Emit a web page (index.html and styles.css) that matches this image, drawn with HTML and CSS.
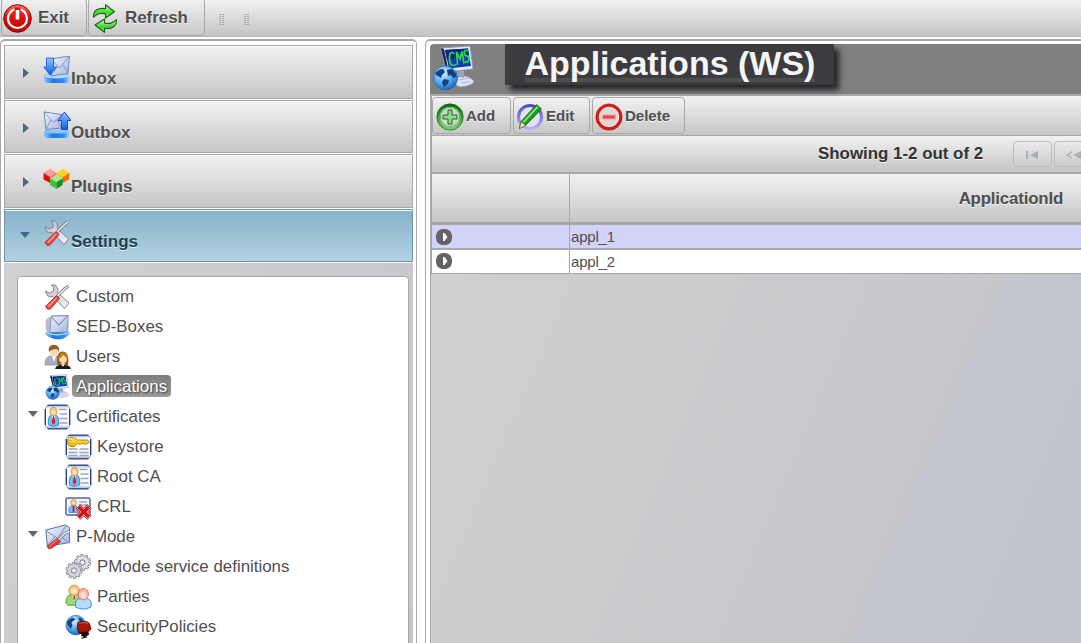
FILE: index.html
```html
<!DOCTYPE html>
<html lang="en">
<head>
<meta charset="utf-8">
<title>Applications (WS)</title>
<link rel="stylesheet" href="styles.css">
</head>
<body>
<svg class="defs" width="0" height="0" aria-hidden="true">
  <defs>
    <linearGradient id="red" x2="0" y2="1"><stop stop-color="#f77"/><stop offset=".4" stop-color="#e21212"/><stop offset="1" stop-color="#b00"/></linearGradient>
    <linearGradient id="green" x2="0" y2="1"><stop stop-color="#0a700a"/><stop offset="1" stop-color="#6fce62"/></linearGradient>
    <linearGradient id="leaf" x2="0" y2="1"><stop stop-color="#cfffae"/><stop offset=".6" stop-color="#43cf32"/><stop offset="1" stop-color="#8df56c"/></linearGradient>
    <linearGradient id="violet" x2="0" y2="1"><stop stop-color="#5048d0"/><stop offset="1" stop-color="#b4b2fa"/></linearGradient>
    <linearGradient id="blue" x2="0" y2="1"><stop stop-color="#8cc8ff"/><stop offset="1" stop-color="#0a5cf0"/></linearGradient>
    <linearGradient id="tray" x2="1" y2="0"><stop stop-color="#8cc4ff"/><stop offset=".35" stop-color="#1c78ea"/><stop offset=".75" stop-color="#2f8bf5"/><stop offset="1" stop-color="#b4dcff"/></linearGradient>
    <linearGradient id="paper" x2="1" y2="1"><stop stop-color="#f2f6ff"/><stop offset="1" stop-color="#a3b4dc"/></linearGradient>
    <linearGradient id="metal" x2="1" y2="1"><stop stop-color="#bcbcc4"/><stop offset="1" stop-color="#f4f4fa"/></linearGradient>
    <linearGradient id="card" x2="0" y2="1"><stop stop-color="#aab6de"/><stop offset=".15" stop-color="#fff"/><stop offset=".85" stop-color="#f4f6fc"/><stop offset="1" stop-color="#98a5d2"/></linearGradient>
    <linearGradient id="gold" x2="0" y2="1"><stop stop-color="#ffee58"/><stop offset="1" stop-color="#efaa00"/></linearGradient>
    <radialGradient id="globe" cx=".4" cy=".3" r=".75"><stop stop-color="#d9f2ff"/><stop offset=".5" stop-color="#5fb3f3"/><stop offset="1" stop-color="#105bb5"/></radialGradient>
    <radialGradient id="face" cy=".6"><stop stop-color="#fff2d8"/><stop offset="1" stop-color="#eebb74"/></radialGradient>
    <radialGradient id="pink" cy=".6"><stop stop-color="#fff6f2"/><stop offset="1" stop-color="#f6a9a0"/></radialGradient>
  </defs>
  <symbol id="i-exit" viewBox="0 0 29 29">
    <circle cx="14.5" cy="14.5" r="13.8" fill="url(#red)" stroke="#8c0000"/>
    <circle cx="14.5" cy="14.5" r="9.500" fill="none" stroke="#fff" stroke-width="2.200"/>
    <path d="M11.500 3.500h6v13h-6z" fill="#d51616"/><path d="M14.500 6v9.500" stroke="#fff" stroke-width="3.600"/>
  </symbol>
  <symbol id="i-refresh" viewBox="0 0 26 29">
    <g fill="url(#leaf)" stroke="#146414" stroke-width="1.100" stroke-linejoin="round">
      <path d="M1.500 13.200C1 6 6.500 3.500 13.500 4.600V.8L22.500 7.800L13.500 14V9.900C8 8.800 5.300 9.500 1.500 13.200Z"/>
      <path d="M24.500 15.600C25 22.800 19.500 25.300 12.500 24.200V28.200L3 21L12.500 15V19.100C18 20.200 20.700 19.300 24.500 15.600Z"/>
    </g>
  </symbol>
  <symbol id="i-inbox" viewBox="0 0 28 28">
    <path d="M1 20q0-2 4-2h18q4 0 4 2v4q0 3-5 3H6q-5 0-5-3z" fill="url(#tray)"/><ellipse cx="14" cy="20" rx="12" ry="2.500" fill="#b4dbff"/>
    <path d="M8 3L26.500 0L25 17.500L8 20z" fill="url(#paper)" stroke="#596fae" stroke-width=".8"/>
    <path d="M8.500 3.500l8 8.500l9.500-11.500M8.500 19l6-9M25 17l-5-8" fill="none" stroke="#7d8fbe" stroke-width=".9"/>
    <path d="M3.500 2h7v9h3L7 19L.8 11h2.700z" fill="url(#blue)" stroke="#1756ce" stroke-width=".8"/>
  </symbol>
  <symbol id="i-outbox" viewBox="0 0 28 28">
    <path d="M1 21q0-2 4-2h18q4 0 4 2v3q0 3-5 3H6q-5 0-5-3z" fill="url(#tray)"/><ellipse cx="14" cy="20.500" rx="12" ry="2" fill="#8bc4ff"/>
    <path d="M1 1L19 3.500V17L3 18.500z" fill="url(#paper)" stroke="#596fae" stroke-width=".8"/>
    <path d="M1.500 1.500l9 10l8-7M3 18l5-9M18 16l-4-7" fill="none" stroke="#7d8fbe" stroke-width=".9"/>
    <path d="M18.500 18.500v-9h-3.500L21.500 1L28 9.500h-3.500v9z" fill="url(#blue)" stroke="#1739ce" stroke-width=".9"/>
  </symbol>
  <symbol id="i-cubes" viewBox="0 0 27 21">
    <path d="M.5 5l6.500-4.500L13.500 5L7 9z" fill="#ffa09c"/><path d="M.5 5L7 9v6L.5 11.500z" fill="#e30d14"/><path d="M13.500 5L7 9v6l6.500-4z" fill="#ff5a5a"/>
    <path d="M13.500 5L20 .5L26.500 5L20 9z" fill="#ffd12c"/><path d="M13.500 5L20 9v6l-6.500-4z" fill="#ffae14"/><path d="M26.500 5L20 9v6l6-3.500z" fill="#f66b05"/>
    <path d="M7 10.500L13.500 6.500l6.500 4L13.500 14z" fill="#a6ea96"/><path d="M7 10.500l6.500 3.500v7L7 17z" fill="#42c331"/><path d="M20 10.500L13.500 14v7l6-4z" fill="#119226"/>
  </symbol>
  <symbol id="i-tools" viewBox="0 0 26 26">
    <path d="M7 1Q13 0 13.500 6L13 8.500L24.500 19L20 24.500L8.500 12.500Q2 14 1 7L5 9L9 7L9 3.500z" fill="url(#metal)" stroke="#7d7d91" stroke-width=".9"/>
    <path d="M13 12L20.500 4.500L24 2" fill="none" stroke="#77778a" stroke-width="3"/><path d="M13 12L20.500 4.500L24 2" fill="none" stroke="#ededf4" stroke-width="1.500"/>
    <path d="M12 11.500l3 3L6 25Q2.500 26.500 1 22.500z" fill="#e64e46" stroke="#a21818" stroke-width=".8"/><path d="M12 14l-8 8.500" stroke="#ffa49a" stroke-width="1.300"/>
  </symbol>
  <symbol id="i-sed" viewBox="0 0 28 28">
    <path d="M1 8Q4 1 12 1h11q2 5 0 17L2 21z" fill="#bcbec7"/>
    <path d="M0 20q6-1 14-1t14 0q-2 7-13 8.500Q3 27 0 20z" fill="url(#tray)"/><path d="M2 20q11 5 24 0" fill="none" stroke="#c2e2ff" stroke-width="1.200"/>
    <path d="M7.500 2.500L25.500 1.500L25 19.500L5.500 20z" fill="url(#paper)" stroke="#6e83b6" stroke-width=".9"/>
    <path d="M8 3.500l7.500 8.500L24.500 2" fill="none" stroke="#5872a8" stroke-width="1"/>
  </symbol>
  <symbol id="i-users" viewBox="0 0 27 26">
    <path d="M1 21Q1 12 7 12h5q5 0 5 9z" fill="#a5adcc" stroke="#747da2" stroke-width=".6"/><path d="M8 12l2 6l2-6z" fill="#fff"/>
    <circle cx="10" cy="7.500" r="4.300" fill="#ffd8a6"/><path d="M5 8Q3.500 1 10 .8Q16 1 15 8Q13.500 3.500 9 5.500Q6 6 5 8z" fill="#936024"/>
    <path d="M13.500 21q-2-13 5-13.500Q26 8 24 21z" fill="#9a5c10"/><circle cx="19" cy="15" r="3.900" fill="#ffdcae"/><path d="M14.500 15Q18 14 19.500 10.500Q21 14 24 15Q23 8.500 19 8.500T14.500 15z" fill="#bd801e"/>
    <path d="M11 25q1-4 6-4l2 1l2-1q5 0 6 4z" fill="#181818"/><path d="M17 19h4l-2 4z" fill="#ffdcae"/>
  </symbol>
  <symbol id="i-cms" viewBox="0 0 44 46">
    <path d="M23 34Q33 27 42 36Q42 40 29 42Q22 41 23 34z" fill="#dfe3f3" stroke="#8e97ba" stroke-width=".7"/><path d="M27 35l10-2M29 38l9-1" stroke="#adb5cc"/>
    <path d="M25 24l7 2v7l-7-2z" fill="#9aa3c4"/>
    <path d="M9 3L38 1L41 24L15 27z" fill="#e3e8f8" stroke="#8d94b4" stroke-width=".9"/>
    <path d="M9 3L15 27L16 23L12 4z" fill="#20234a"/><path d="M13 5L36 3.500L39 21L17 23.500z" fill="#123daa"/><path d="M13 5L36 3.500L37 10L15 15z" fill="#0a2880"/>
    <g fill="none" stroke="#25dc50" stroke-width="1.700"><path d="M22.500 8.500Q17 5 17.500 14T24 19.500M25.500 20L24.500 7L28 14L30 6.500L32 18.500M37 6Q31.500 3.500 32.500 9Q33 11 35.500 11Q38 13 36.500 16Q35 18 33 16.500"/></g>
    <circle cx="13.500" cy="33" r="12" fill="url(#globe)" stroke="#2569b6" stroke-width=".7"/>
    <path d="M3 29q3-5 8-5l2 3l-3 3l-1 3l-3-2zM15 25l5-1l4 5v3l-3 1l-2-3l-3 1zM12 34l5 1l-1 4l-4 3l-2-5z" fill="#153f7d"/>
  </symbol>
  <symbol id="i-cert" viewBox="0 0 26 26">
    <rect x=".8" y="1.300" width="24.400" height="23.400" rx="4" fill="url(#card)" stroke="#8d9bc9" stroke-width=".8"/>
    <path d="M3.500 1.300h19M3.500 24.700h19" stroke="#43558f" stroke-width="1.500" stroke-linecap="round"/><path d="M.8 5v16M25.200 5v16" stroke="#243c83" stroke-width="1.300"/>
    <path d="M14 5.500h8M15 10h8M15 14.500h8M15 19h8" stroke="#a1a5ba" stroke-width="1.500"/>
    <path d="M4 21q-1-9 3-10h4q4 1 3 10q-5 3-10 0z" fill="#71bdf6" stroke="#287fca" stroke-width=".8"/><path d="M7 11l2 7l2-7z" fill="#fff"/><path d="M8.500 12l-1.300 6l1.800 3l1.800-3l-1.300-6z" fill="#e21a1a"/>
    <ellipse cx="9" cy="7.500" rx="3.500" ry="4.200" fill="url(#face)" stroke="#c5872e" stroke-width=".7"/>
  </symbol>
  <symbol id="i-key" viewBox="0 0 26 26">
    <rect x=".8" y="1.300" width="24.400" height="23.400" rx="4" fill="url(#card)" stroke="#8d9bc9" stroke-width=".8"/>
    <path d="M3.500 1.300h19M3.500 24.700h19" stroke="#43558f" stroke-width="1.500" stroke-linecap="round"/><path d="M.8 5v16M25.200 5v16" stroke="#243c83" stroke-width="1.300"/>
    <path d="M3 15h9M3 18.500h9M3 21.500h9M14 15h9M14 18.500h9M14 21.500h9" stroke="#a1a5ba" stroke-width="1.300"/>
    <path d="M2 6Q3 2.500 8 3.500L12 6L22 6L24 8L21.500 10H18L17 9L15 10.500L12 9.500Q9 14 5 12.500Q1 11 2 6z" fill="url(#gold)" stroke="#b27b00" stroke-width=".9"/><circle cx="4.500" cy="7.500" r="1.200" fill="#fff" stroke="#a76c00" stroke-width=".6"/>
  </symbol>
  <symbol id="i-crl" viewBox="0 0 27 26">
    <rect x="1" y="4" width="24" height="17" rx="1.500" fill="#f3f5fc" stroke="#52649f" stroke-width="1.500"/>
    <path d="M14 8h8M14 11h8" stroke="#a1a5ba" stroke-width="1.300"/>
    <path d="M4 18.500q-1-6 3-7h3q4 1 3 7z" fill="#71bdf6" stroke="#287fca" stroke-width=".7"/><path d="M8.500 12v6" stroke="#e21a1a" stroke-width="1.800"/><circle cx="8.500" cy="8.500" r="2.900" fill="url(#face)" stroke="#c5872e" stroke-width=".6"/>
    <path d="M13 12.500l11.500 11M24.500 12.500L13 23.500" stroke="#900" stroke-width="6"/><path d="M13.300 12.800l11 10.500M24.300 12.800L13.300 23.300" stroke="#fff" stroke-width="4.600"/><path d="M13.500 13l10.500 10M24 13L13.500 23" stroke="#d01010" stroke-width="3.600"/>
  </symbol>
  <symbol id="i-pmode" viewBox="0 0 28 28">
    <path d="M1.500 6.500L22.500 1L27 4V20L3 24z" fill="url(#paper)" stroke="#4d679c" stroke-width="1"/>
    <path d="M2 7.500l12 8L23 2M3 23l8-9M25 19l-8-6" fill="none" stroke="#7488b8" stroke-width="1"/>
    <path d="M14 18l8-8l5-2" fill="none" stroke="#64647a" stroke-width="3"/><path d="M14 18l8-8l5-2" fill="none" stroke="#ececf4" stroke-width="1.700"/>
    <path d="M13 15.500l4.500 3.500L7 26.500H4L3 24z" fill="#e23b38" stroke="#a01818" stroke-width=".7"/><path d="M13 17.500l-8 7" stroke="#ff9a90"/>
  </symbol>
  <symbol id="i-gears" viewBox="0 0 27 26">
    <g fill="none" stroke="#81818c"><circle cx="17.500" cy="8.500" r="6.700" stroke-width="3.600" stroke-dasharray="2.700 1.510"/><circle cx="17.500" cy="8.500" r="4.800" stroke-width="4.600"/></g>
    <g fill="none" stroke="#dfdfe8"><circle cx="17.500" cy="8.500" r="6.700" stroke-width="2.200" stroke-dasharray="1.500 2.710" stroke-dashoffset="-.6"/><circle cx="17.500" cy="8.500" r="4.600" stroke-width="3.300"/></g>
    <g fill="none" stroke="#81818c"><circle cx="9" cy="16.500" r="6.700" stroke-width="3.600" stroke-dasharray="2.700 1.510"/><circle cx="9" cy="16.500" r="4.800" stroke-width="4.600"/></g>
    <g fill="none" stroke="#d4d4df"><circle cx="9" cy="16.500" r="6.700" stroke-width="2.200" stroke-dasharray="1.500 2.710" stroke-dashoffset="-.6"/><circle cx="9" cy="16.500" r="4.600" stroke-width="3.300"/></g>
    <g fill="#fff" stroke="#81818c" stroke-width=".9"><circle cx="17.500" cy="8.500" r="2.400"/><circle cx="9" cy="16.500" r="2.400"/></g>
  </symbol>
  <symbol id="i-parties" viewBox="0 0 28 27">
    <path d="M1 20Q1 11 7 11h5q5 0 5 8v3H3z" fill="#96dc6f" stroke="#3f9c26" stroke-width=".9"/><path d="M7 11h5l-2.500 7z" fill="#fff"/><path d="M9.500 12v4" stroke="#f00" stroke-width="1.500"/><circle cx="9.500" cy="6.500" r="5.500" fill="url(#face)" stroke="#c5872e" stroke-width=".8"/>
    <path d="M11 24Q10 15 16 15h6q6 0 5 9q-8 4-16 0z" fill="#b3dcff" stroke="#2c7fe0" stroke-width=".9"/><ellipse cx="19" cy="10.500" rx="5.400" ry="6" fill="url(#pink)" stroke="#db6c64" stroke-width=".8"/>
  </symbol>
  <symbol id="i-security" viewBox="0 0 29 26">
    <circle cx="11.500" cy="11" r="10.500" fill="url(#globe)" stroke="#1d5da6" stroke-width=".7"/><path d="M2 8q3-5 7-5l2 2l-4 3l1 4l-2 3l-3-4zM14 3l4 1l2 3l-4 1z" fill="#154480"/>
    <path d="M14 8l9-1l3 2l2 6l-3 3l-9 1l-3-4z" fill="#a91608" stroke="#4d0500" stroke-width=".9"/><path d="M15 9l8-1l2 2" fill="none" stroke="#e7533b" stroke-width="1.200"/><path d="M13 16l3 3l9-1l1 3l-3 2l1 1l-7 2l3-3h-3l1-2l-3-1z" fill="#170a14"/>
  </symbol>
  <symbol id="i-add" viewBox="0 0 28 28">
    <circle cx="14" cy="14" r="11.800" fill="#f3f3f3" stroke="url(#green)" stroke-width="3"/><circle cx="14" cy="14" r="13.200" fill="none" stroke="#0f5c12" stroke-width=".6"/><circle cx="14" cy="14" r="9.600" fill="#d3d6d1" stroke="#2a8a2c" stroke-width=".7"/>
    <path d="M12 7h4v5h5v4h-5v5h-4v-5H7v-4h5z" fill="#90d78b" stroke="#126f17"/>
  </symbol>
  <symbol id="i-edit" viewBox="0 0 28 28">
    <circle cx="14" cy="14" r="11.500" fill="#e3e3f0" stroke="url(#violet)" stroke-width="3"/>
    <path d="M20.500 1.500l5 4.500L10 22L3.500 25.500L5 18.500z" fill="#189d1c" stroke="#176118" stroke-width=".8"/><path d="M21.500 4L7.500 19" stroke="#95ec86" stroke-width="1.800"/><path d="M5 18.500l5 4l-6.500 3z" fill="#f3dfb5" stroke="#484830" stroke-width=".6"/>
  </symbol>
  <symbol id="i-delete" viewBox="0 0 28 28">
    <circle cx="14" cy="14" r="11.600" fill="#dadada" stroke="#d81b0e" stroke-width="3"/><circle cx="14" cy="14" r="13.200" fill="none" stroke="#9b1108" stroke-width=".6"/><circle cx="14" cy="14" r="9.800" fill="none" stroke="#fff" stroke-width=".6"/>
    <rect x="7.500" y="12" width="13" height="4" fill="#f34347" stroke="#f5a3a3" stroke-width="1"/>
  </symbol>
  <symbol id="i-expand" viewBox="0 0 16 16"><rect width="16" height="16" rx="7" fill="#656164"/><path d="M7 4h1.500L11.500 8L8.500 12H7z" fill="#fff"/></symbol>
</svg>

<div class="app">
  <header class="topbar">
    <button class="btn btn-exit"><svg class="ic-exit"><use href="#i-exit"/></svg><span>Exit</span></button>
    <button class="btn btn-refresh"><svg class="ic-refresh"><use href="#i-refresh"/></svg><span>Refresh</span></button>
    <i class="grip"></i><i class="grip"></i>
  </header>
  <div class="columns">
    <aside class="side">
      <h3 class="acc"><i class="tri"></i><svg><use href="#i-inbox"/></svg><span>Inbox</span></h3>
      <h3 class="acc"><i class="tri"></i><svg><use href="#i-outbox"/></svg><span>Outbox</span></h3>
      <h3 class="acc"><i class="tri"></i><svg class="ic-cubes"><use href="#i-cubes"/></svg><span>Plugins</span></h3>
      <h3 class="acc active"><i class="tri down"></i><svg class="ic-tools"><use href="#i-tools"/></svg><span>Settings</span></h3>
      <div class="acc-body">
        <ul class="tree">
          <li><i class="tog"></i><svg><use href="#i-tools"/></svg><span>Custom</span></li>
          <li><i class="tog"></i><svg><use href="#i-sed"/></svg><span>SED-Boxes</span></li>
          <li><i class="tog"></i><svg><use href="#i-users"/></svg><span>Users</span></li>
          <li class="selected"><i class="tog"></i><svg><use href="#i-cms"/></svg><span>Applications</span></li>
          <li><i class="tog open"></i><svg><use href="#i-cert"/></svg><span>Certificates</span></li>
          <li class="child"><i class="tog"></i><svg><use href="#i-key"/></svg><span>Keystore</span></li>
          <li class="child"><i class="tog"></i><svg><use href="#i-cert"/></svg><span>Root CA</span></li>
          <li class="child"><i class="tog"></i><svg><use href="#i-crl"/></svg><span>CRL</span></li>
          <li><i class="tog open"></i><svg><use href="#i-pmode"/></svg><span>P-Mode</span></li>
          <li class="child"><i class="tog"></i><svg><use href="#i-gears"/></svg><span>PMode service definitions</span></li>
          <li class="child"><i class="tog"></i><svg><use href="#i-parties"/></svg><span>Parties</span></li>
          <li class="child"><i class="tog"></i><svg><use href="#i-security"/></svg><span>SecurityPolicies</span></li>
        </ul>
      </div>
    </aside>
    <main class="main">
      <div class="titlebar"><svg><use href="#i-cms"/></svg><h1><span>Applications (WS)</span></h1></div>
      <div class="content">
        <div class="tools">
          <button class="btn w-add"><svg><use href="#i-add"/></svg><span>Add</span></button>
          <button class="btn w-edit"><svg><use href="#i-edit"/></svg><span>Edit</span></button>
          <button class="btn w-del"><svg><use href="#i-delete"/></svg><span>Delete</span></button>
        </div>
        <div class="pager">
          <span class="count">Showing 1-2 out of 2</span>
          <span class="page"><svg viewBox="0 0 13 8"><path d="M0 0h2v8H0zM12 0v8L4 4z"/></svg></span>
          <span class="page next"><svg viewBox="0 0 16 8"><path d="M6 0v1.500L2.500 4L6 6.500V8L0 4zM15 0v8L7 4z"/></svg></span>
        </div>
        <div class="row head"><div class="c1"></div><div class="c2">ApplicationId</div></div>
        <div class="row first"><div class="c1"><svg><use href="#i-expand"/></svg></div><div class="c2">appl_1</div></div>
        <div class="row second"><div class="c1"><svg><use href="#i-expand"/></svg></div><div class="c2">appl_2</div></div>
      </div>
    </main>
  </div>
</div>
</body>
</html>
```
FILE: styles.css
```css
* { box-sizing: border-box; }
body { margin: 0; overflow: hidden; font: 16.9px "Liberation Sans", Arial, sans-serif; color: #4f4f4f; background: #fff; }
.defs { position: absolute; }
svg { display: block; flex: none; overflow: visible; }
button { font: inherit; color: inherit; }
.app { width: 1081px; height: 643px; display: flex; flex-direction: column; overflow: hidden; }

.topbar { flex: none; height: 37px; display: flex; background: linear-gradient(#f2f2f2, #c4c4c4); border-bottom: 1px solid #b8b8b8; padding-left: 1px; }
.btn { display: flex; align-items: center; flex: none; padding: 0; border: 1px solid #a8a8a8; border-radius: 4px; background: linear-gradient(#f2f2f2, #c8c8c8); font-weight: bold; text-shadow: 0 1px 0 rgba(255,255,255,.7); white-space: nowrap; }
.topbar .btn { height: 38px; margin-top: -2px; }
.btn-exit { width: 86px; }
.btn-refresh { width: 117px; margin-left: 1px; }
.btn span { position: relative; top: 1px; }
.btn-exit span { margin-left: 6px; }
.btn-refresh span { margin-left: 7px; }
.ic-exit { width: 29px; height: 29px; margin: 2px 0 0 1px; }
.ic-refresh { width: 26px; height: 29px; margin: 2px 0 0 3px; }
.grip { width: 5px; height: 12px; margin: 14px 0 0 14px; background: repeating-linear-gradient(#999 0 1px, transparent 1px 2px); border-left: 0; -webkit-mask: linear-gradient(90deg, #000 2px, transparent 2px 3px, #000 3px); opacity: .8; }
.grip + .grip { margin-left: 20px; }

.columns { flex: none; height: 620px; margin-top: 2px; display: flex; gap: 8px; }
.side { width: 417px; border: 1px solid #a8a8a8; border-top-width: 2px; border-radius: 5px 5px 0 0; padding: 4px 3px 0; }
.acc { display: flex; margin: 0 0 1px; height: 54px; border: 1px solid #a8a8a8; background: linear-gradient(#f2f2f2, #c6c6c6); box-shadow: inset 0 1px #fff; font-size: 17px; text-shadow: 0 1px 0 rgba(255,255,255,.7); }
.acc:nth-child(even) { height: 53px; }
.acc svg { width: 28px; height: 28px; margin: 10px 0 0 10px; }
.acc .ic-cubes { width: 27px; height: 21px; margin-top: 13px; margin-right: 1px; }
.acc .ic-tools { width: 26px; height: 26px; margin: 10px 1px 0 11px; }
.acc span { margin: 22px 0 0 0; line-height: 20px; }
.acc:first-child span { margin-top: 23px; }
.tri { width: 6px; height: 10px; margin: 22px 4px 0 18px; border-left: 6px solid #47697d; border-top: 5px solid transparent; border-bottom: 5px solid transparent; }
.tri.down { width: 10px; height: 6px; border-top: 6px solid #3a6b87; border-left: 5px solid transparent; border-right: 5px solid transparent; border-bottom: 0; margin: 22px 3px 0 15px; }
.acc.active { color: #1c4257; border-color: #6d97b0; background: linear-gradient(#87b2cc, #b3d1e0); }
.acc-body { height: 390px; padding: 13px 4px 0 13px; background: linear-gradient(112deg, #cfd0d0, #c5c6ce); }
.tree { list-style: none; margin: 0; height: 390px; padding: 5px 0 0 9px; background: #fff; border: 1px solid #a8a8a8; border-radius: 4px; }
.tree li { display: flex; align-items: center; height: 30px; }
.tree li.child { padding-left: 21px; }
.tree svg { width: 27px; height: 26px; }
.tree span { margin: -2px 0 0 1px; padding: 1px 4px 0; line-height: 21px; border-radius: 4px; }
.tree .selected span { color: #fff; background: linear-gradient(#7d7d7d, #9b9b9b); text-shadow: 1px 1px 2px #333; }
.tog { width: 17px; height: 12px; }
.tog.open::before { content: ""; display: block; width: 0; margin: 0 0 0 1px; border: 5px solid transparent; border-top: 6px solid #666; border-bottom: 0; }

.main { flex: 1; min-width: 0; border: 1px solid #a8a8a8; border-width: 2px 0 0 1px; border-radius: 5px 0 0; padding: 3px 0 0 4px; }
.titlebar { height: 50px; display: flex; background: #808080; border-radius: 4px 0 0; }
.titlebar svg { width: 44px; height: 46px; margin: 1px 0 0 2px; }
h1 { margin: 0 0 0 29px; width: 329px; height: 41px; background: #3c3b40; color: #f5f5f5; font-size: 34px; line-height: 38px; box-shadow: 5px 5px 6px #222; text-align: center; padding-left: 1px; }
h1 span { background: linear-gradient(#4d4d4d, #4d4d4d) 0 34px / 100% 4px no-repeat; display: inline-block; height: 38px; }
.content { height: 570px; border-left: 1px solid #a8a8a8; background: linear-gradient(113deg, #cfd0ce, #cbccce 40%, #c7c7cb 73%, #c4c6d0 73%, #c0c2cc); }
.tools, .pager, .row { border-left: 1px solid #a8a8a8; }
.tools { display: flex; gap: 2px; height: 41px; border-top: 2px solid #a8a8a8; padding: 1px 0 0; background: linear-gradient(#f2f2f2, #c6c6c6); }
.tools .btn { height: 37px; font-size: 15px; }
.tools svg { width: 28px; height: 28px; margin: 2px 2px 0 3px; }
.tools span { top: 0; }
.w-add { width: 79px; } .w-edit { width: 77px; } .w-del { width: 93px; }
.tools .w-edit svg, .tools .w-del svg { margin: 2px 2px 0; }
.pager { height: 37px; display: flex; border-top: 1px solid #a8a8a8; background: linear-gradient(#f2f2f2, #c4c4c4); color: #333; font-weight: bold; padding-left: 386px; }
.count { flex: none; line-height: 36px; width: 195px; text-shadow: 0 1px 0 rgba(255,255,255,.7); white-space: nowrap; }
.page { width: 39px; height: 26px; margin: 5px 2px 0 0; border: 1px solid #bdbdbd; border-radius: 4px; flex: none; display: flex; align-items: center; justify-content: center; padding-top: 2px; }
.page svg { width: 13px; height: 8px; fill: #a3b2ba; }
.next svg { width: 16px; }
.row { display: grid; grid-template-columns: 137px 1fr; font-size: 15px; }
.row .c2 { border-left: 1px solid #a8a8a8; padding-left: 1px; letter-spacing: -.2px; }
.row svg { width: 16px; height: 16px; margin: 4px 0 0 4px; }
.head { height: 53px; border-top: 2px solid #a8a8a8; border-bottom: 3px solid #a8a8a8; background: linear-gradient(#f2f2f2, #c6c6c6); font-weight: bold; font-size: 16.9px; }
.head .c2 { padding: 0 18px 0 0; text-align: right; line-height: 50px; text-shadow: 0 1px 0 rgba(255,255,255,.7); }
.first { height: 25px; border-bottom: 2px solid #a8a8a8; background: #d2d3f8; line-height: 24px; }
.second { height: 24px; border-bottom: 1px solid #a8a8a8; background: #fff; line-height: 24px; }
.second svg { margin-top: 3px; }
```
